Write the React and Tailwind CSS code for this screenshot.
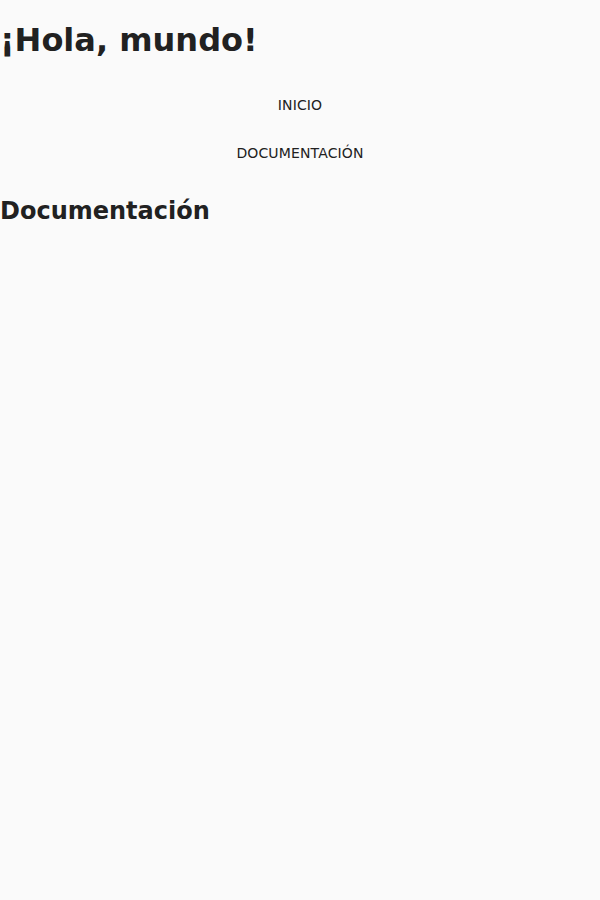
export default function App() {
  const links = ['Inicio', 'Documentación']
  return (
    <div className="min-h-screen bg-[#fafafa] text-[#212121] font-['DejaVu_Sans',sans-serif]">
      <h1 className="pt-[22px] text-[32px] leading-[37px] font-bold">¡Hola, mundo!</h1>
      <nav className="mt-[22px] flex flex-col">
        {links.map((l) => (
          <a key={l} href="#" className="h-12 flex items-center justify-center text-sm uppercase tracking-[0.01em] text-[#212121]">
            {l}
          </a>
        ))}
      </nav>
      <h2 className="mt-5 text-2xl leading-[28px] font-bold">Documentación</h2>
    </div>
  )
}
